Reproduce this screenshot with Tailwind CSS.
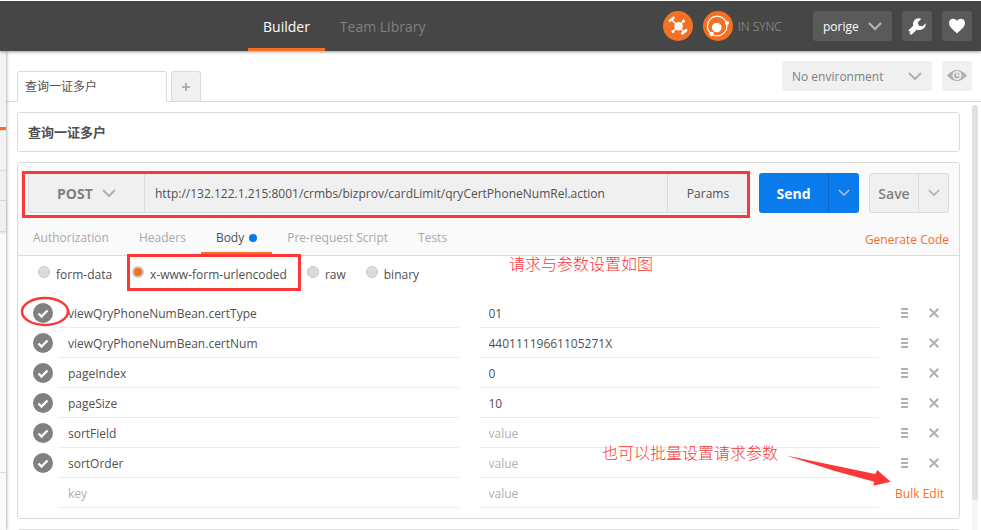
<!DOCTYPE html>
<html lang="zh-CN">
<head>
<meta charset="utf-8">
<title>Builder</title>
<script src="https://cdn.jsdelivr.net/npm/@tailwindcss/browser@4"></script>
</head>
<body class="h-screen overflow-hidden flex flex-col bg-white text-[#505050] text-xs font-['Open_Sans','Noto_Sans_CJK_SC',sans-serif]">

<svg class="hidden">
  <symbol id="chevron" viewBox="0 0 14 9"><path d="M1 1l6 6 6-6" fill="none" stroke="currentColor" stroke-width="2"/></symbol>
  <symbol id="tick" viewBox="0 0 20 20"><path d="M5.500 10.500l3 3 6-6" fill="none" stroke="#fff" stroke-width="2.400"/></symbol>
  <symbol id="handle" viewBox="0 0 7 10"><path d="M0 1h7M0 5h7M0 9h7" stroke="#b0b0b0" stroke-width="2"/></symbol>
  <symbol id="cross" viewBox="0 0 10 10"><path d="M.7.700l8.600 8.600M9.300.7l-8.600 8.600" stroke="#b0b0b0" stroke-width="2"/></symbol>
</svg>

<header class="relative z-10 shrink-0 flex justify-between border-t border-white bg-[#464646] shadow-[0_1px_3px_rgba(0,0,0,0.4)]">
  <nav class="flex h-[50px] pl-[248px] text-sm">
    <a href="#" class="px-[15px] pt-4 leading-5 text-white border-b-[3px] border-[#f47023]">Builder</a>
    <a href="#" class="px-[15px] pt-4 leading-5 text-[#808080]">Team Library</a>
  </nav>
  <div class="flex items-center pr-[9px]">
    <button aria-label="Interceptor" class="size-[30px]">
      <svg viewBox="0 0 30 30" class="size-full"><circle cx="15" cy="15" r="15" fill="#f47023"/><circle cx="15.500" cy="15.300" r="4.300" fill="#fff"/><g stroke="#fff" fill="none"><path d="M9 9l13 13M20.500 10l-10.500 10.500" stroke-width="1.300"/><path d="M6 10.500l5.500-4.500M18.500 23l5.500-4.500" stroke-width="2.400"/></g><circle cx="20.500" cy="10" r="1.500" fill="#fff"/><circle cx="10" cy="20.500" r="1.500" fill="#fff"/></svg>
    </button>
    <button aria-label="Sync" class="ml-2.5 size-[30px]">
      <svg viewBox="0 0 30 30" class="size-full"><circle cx="15" cy="15" r="15" fill="#f47023"/><circle cx="13.700" cy="16.500" r="4.800" fill="#fff"/><circle cx="14.200" cy="15" r="9.800" fill="none" stroke="#fff" stroke-width="1.200"/><circle cx="24" cy="12" r="2" fill="#fff"/><circle cx="8.700" cy="23" r="2.200" fill="#fff"/></svg>
    </button>
    <span class="ml-[5px] w-[75px] pt-0.5 font-light text-[#a0a0a0]">IN SYNC</span>
    <button class="flex items-center justify-between w-[79px] h-[30px] px-2.5 rounded-[3px] bg-[#5a5a5a] text-white"><span class="pt-0.5">porige</span><svg class="w-3.5 h-[9px] text-[#b8b8b8]"><use href="#chevron"/></svg></button>
    <button aria-label="Settings" class="ml-2.5 size-[30px] rounded-[3px] bg-[#5a5a5a]">
      <svg viewBox="0 0 30 30" class="size-full"><path d="M19.300 7.800C15 5.800 10 9.500 11.300 14.600L6.200 19.400 8 20.600 7.500 22.200 9.200 24 14.800 18.800C19.500 20 24.200 17 23.800 12.300L20.500 15.300 17 14.800 15.700 11.500Z" fill="#fff"/></svg>
    </button>
    <button aria-label="Favourites" class="ml-2.5 size-[30px] rounded-[3px] bg-[#5a5a5a]">
      <svg viewBox="0 0 30 30" class="size-full"><path d="M15 22.500C13 20 7 16.500 7 12 7 7 13 6.500 15 10 17 6.500 23 7 23 12 23 16.500 17 20 15 22.500Z" fill="#fff"/></svg>
    </button>
  </div>
</header>

<div class="flex flex-1 min-h-0">
  <aside class="relative z-0 shrink-0 w-1.5 flex flex-col bg-[#fafafa] shadow-[1px_0_3px_rgba(0,0,0,0.3)]">
    <div class="h-[79px] bg-[#f3f3f3] border-b-[3px] border-[#f47023]"></div>
    <div class="h-[41px] bg-[#f3f3f3] border-y border-[#dbdbdb]"></div>
    <div class="h-[30px] bg-[#f0f0f0] border-b border-[#dbdbdb]"></div>
    <div class="h-[31px] bg-[#f0f0f0] border-b border-[#dbdbdb] shadow-sm"></div>
    <div class="h-[241px] border-b border-[#dbdbdb]"></div>
  </aside>

  <main class="flex-1 min-w-0 flex flex-col">
    <div class="shrink-0 flex justify-between h-[51px] pl-[11px] pr-[9px] border-b border-[#dbdbdb]">
      <div class="flex items-end gap-1 h-[51px]">
        <button class="w-[150px] h-[31px] px-[7px] text-left leading-[30px] bg-white rounded-t-[3px] border border-b-0 border-[#dbdbdb]">查询一证多户</button>
        <button aria-label="New tab" class="size-[30px] mb-px flex items-center justify-center bg-[#f0f0f0] rounded-t-[3px] border border-b-0 border-[#dbdbdb]"><svg viewBox="0 0 8 8" class="size-2"><path d="M4 0v8M0 4h8" stroke="#b0b0b0" stroke-width="2"/></svg></button>
      </div>
      <div class="flex gap-2.5 pt-2.5">
        <div class="grid w-[150px] h-[30px]">
          <select aria-label="Environment" class="col-start-1 row-start-1 appearance-none pl-2.5 pt-0.5 rounded-[3px] bg-[#f0f0f0] text-[#808080]"><option>No environment</option></select>
          <svg class="col-start-1 row-start-1 justify-self-end self-center mr-2.5 w-3.5 h-[9px] text-[#b0b0b0] pointer-events-none"><use href="#chevron"/></svg>
        </div>
        <button aria-label="Environment quick look" class="size-[30px] rounded-[3px] bg-[#f0f0f0]">
          <svg viewBox="0 0 30 30" class="size-full"><path d="M5 14.500Q15 3.500 25 14.500 15 25.500 5 14.500Z" fill="#b0b0b0"/><circle cx="15" cy="14.500" r="4.500" fill="#f0f0f0"/><circle cx="15" cy="14.500" r="3" fill="#b0b0b0"/><path d="M15 11.500v3h3" stroke="#f0f0f0" stroke-width="1.500" fill="none"/></svg>
        </button>
      </div>
    </div>

    <div class="flex flex-1 min-h-0">
      <div class="flex-1 min-w-0 pl-[11px] pr-3 pt-2.5 flex flex-col gap-2.5 overflow-hidden">
        <h1 class="shrink-0 h-10 px-2.5 leading-[38px] text-[13px] font-bold rounded-[3px] border border-[#dbdbdb]">查询一证多户</h1>

        <section class="relative shrink-0 rounded-[3px] border border-[#dbdbdb]">
          <div class="bg-[#fafafa] border-b border-[#dbdbdb]">
            <div class="flex gap-2.5 px-2.5 pt-2.5">
              <div class="relative flex flex-1 h-10 bg-[#f0f0f0] rounded-[3px] border border-[#dbdbdb]">
                <div class="grid w-[116px] border-r border-[#dbdbdb]">
                  <select aria-label="Method" class="col-start-1 row-start-1 appearance-none pl-7 pt-0.5 text-sm font-bold text-[#808080]"><option>POST</option></select>
                  <svg class="col-start-1 row-start-1 justify-self-end self-center mr-7 w-3.5 h-[9px] text-[#b0b0b0] pointer-events-none"><use href="#chevron"/></svg>
                </div>
                <input aria-label="Request URL" class="flex-1 min-w-0 px-2.5 pt-0.5" value="http://132.122.1.215:8001/crmbs/bizprov/cardLimit/qryCertPhoneNumRel.action">
                <button class="w-[81px] pt-0.5 border-l border-[#dbdbdb]">Params</button>
                <div class="absolute -left-[7px] -right-0.5 -top-[3px] -bottom-1.5 border-[3px] border-[#fb3838] pointer-events-none"></div>
              </div>
              <div class="flex w-[100px] rounded-[3px] bg-[#097bed] text-white">
                <button class="flex-1 pt-0.5 text-sm font-bold">Send</button>
                <button aria-label="Send options" class="w-[31px] flex items-center justify-center border-l border-[#0767c6]"><svg class="w-3 h-2 text-[#b0b8c8]"><use href="#chevron"/></svg></button>
              </div>
              <div class="flex w-20 rounded-[3px] bg-[#f0f0f0] border border-[#dbdbdb] text-[#808080]">
                <button class="flex-1 pt-0.5 text-sm font-semibold">Save</button>
                <button aria-label="Save options" class="w-[30px] flex items-center justify-center border-l border-[#dbdbdb]"><svg class="w-3 h-2 text-[#b0b0b0]"><use href="#chevron"/></svg></button>
              </div>
            </div>
            <div class="flex justify-between h-[42px] pt-2.5 pr-2.5">
              <nav class="flex h-8 leading-[30px] text-[#a9a9a9]">
                <a href="#" class="px-[15px]">Authorization</a>
                <a href="#" class="px-[15px]">Headers</a>
                <a href="#" class="px-[15px] flex gap-[5px] text-[#505050] border-b-[3px] border-[#f47023]">Body<span class="mt-[11px] size-2 rounded-full bg-[#097bed]"></span></a>
                <a href="#" class="px-[15px]">Pre-request Script</a>
                <a href="#" class="px-[15px]">Tests</a>
              </nav>
              <a href="#" class="leading-[34px] text-[#f47023]">Generate Code</a>
            </div>
          </div>

          <form>
            <div class="flex gap-5 pl-5 h-[42px] pt-2.5">
              <label class="flex gap-1.5 leading-[18px]"><input type="radio" name="mode" class="appearance-none size-3 rounded-full bg-[#dbdbdb] border border-[#cacaca]">form-data</label>
              <label class="relative flex gap-1.5 leading-[18px]"><input type="radio" name="mode" checked class="appearance-none size-3 rounded-full bg-[#dbdbdb] border border-[#cacaca] checked:bg-[#f47023] checked:border-2"><span>x-www-form-urlencoded</span>
                <span class="absolute -left-[5px] -right-3.5 -top-3 h-[37px] border-[3px] border-[#fb3838] pointer-events-none"></span></label>
              <label class="flex gap-1.5 leading-[18px]"><input type="radio" name="mode" class="appearance-none size-3 rounded-full bg-[#dbdbdb] border border-[#cacaca]">raw</label>
              <label class="flex gap-1.5 leading-[18px]"><input type="radio" name="mode" class="appearance-none size-3 rounded-full bg-[#dbdbdb] border border-[#cacaca]">binary</label>
            </div>

            <table class="w-full table-fixed mb-2.5">
              <colgroup><col class="w-10"><col><col class="w-5"><col><col class="w-20"></colgroup>
              <tbody id="params"></tbody>
            </table>
          </form>

          <svg class="absolute left-[2px] top-[132px] w-[50px] h-8 pointer-events-none" viewBox="0 0 50 32"><ellipse cx="25" cy="16.500" rx="23" ry="13.500" fill="none" stroke="#fb3838" stroke-width="2.500"/></svg>
          <p class="absolute left-[491px] top-[89px] text-base font-light text-[#fb3838] whitespace-nowrap">请求与参数设置如图</p>
          <p class="absolute right-[181px] top-[278px] text-base font-light text-[#fb3838] whitespace-nowrap">也可以批量设置请求参数</p>
          <svg class="absolute right-[67px] top-[291px] w-[107px] h-[34px] pointer-events-none" viewBox="0 0 107 34"><path d="M1 1.500L90.300 20 92.300 16 105.700 27.700 88.300 31.700 89.300 27.700 50 17Z" fill="#fb3838"/></svg>
        </section>

        <section class="shrink-0 h-10 rounded-[3px] border border-[#dbdbdb]"></section>
      </div>
      <div class="w-2 mr-px pt-[3px]"><div class="h-full w-1.5 bg-[#f6f6f6] rounded-t-[3px]"><div class="h-[93%] rounded-[3px] bg-[#e1e1e1]"></div></div></div>
    </div>
  </main>
</div>

<script>
  const rows = [
    ['viewQryPhoneNumBean.certType', '01'],
    ['viewQryPhoneNumBean.certNum', '44011119661105271X'],
    ['pageIndex', '0'],
    ['pageSize', '10'],
    ['sortField', ''],
    ['sortOrder', ''],
    null
  ];
  const field = (name, value) => `<td class="p-0"><input aria-label="${name}" placeholder="${name}" value="${value}" class="block w-full h-[30px] px-2.5 pt-px border-b border-[#ececec] placeholder:text-[#b0b0b0]"></td>`;
  document.getElementById('params').innerHTML = rows.map(r => `<tr>
    <td class="p-0">${r ? `<span class="grid size-5 ml-[15px]"><input type="checkbox" checked aria-label="Enable ${r[0]}" class="col-start-1 row-start-1 appearance-none size-5 rounded-full bg-[#808080]"><svg class="col-start-1 row-start-1 size-5 pointer-events-none"><use href="#tick"/></svg></span>` : ''}</td>
    ${field('key', r ? r[0] : '')}<td class="p-0"></td>${field('value', r ? r[1] : '')}
    <td class="p-0">${r
      ? `<div class="flex items-center justify-end gap-5 pr-5"><button type="button" aria-label="Reorder" class="w-2"><svg class="w-[7px] h-2.5"><use href="#handle"/></svg></button><button type="button" aria-label="Remove"><svg class="size-2.5"><use href="#cross"/></svg></button></div>`
      : `<a href="#" class="block pt-0.5 pr-[15px] text-right text-[#f47023]">Bulk Edit</a>`}</td>
  </tr>`).join('');
</script>
</body>
</html>
